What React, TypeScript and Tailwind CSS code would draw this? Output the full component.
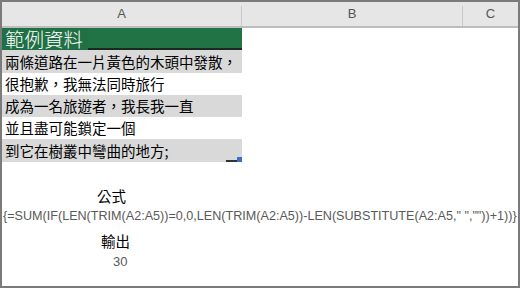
const rows = [
  { text: "兩條道路在一片黃色的木頭中發散，", bg: "bg-[#d9d9d9]", h: "h-[23px]" },
  { text: "很抱歉，我無法同時旅行", bg: "bg-white", h: "h-[22px]" },
  { text: "成為一名旅遊者，我長我一直", bg: "bg-[#d9d9d9]", h: "h-[22px]" },
  { text: "並且盡可能鎖定一個", bg: "bg-white", h: "h-[22px]" },
];

const cjk = { fontFamily: '"Noto Sans CJK TC", "Noto Sans", sans-serif' };
const latin = { fontFamily: '"Liberation Sans", Arial, sans-serif' };

const HeaderCell = ({ label, className }: { label: string; className: string }) => (
  <div className={`flex h-full ${className}`}>
    <div className="flex-1 flex items-center justify-center text-[13px] text-[#555]" style={latin}>
      {label}
    </div>
    <div className="w-px h-[20px] self-end bg-[#c9c9c9]" />
  </div>
);

export default function App() {
  return (
    <div className="w-[520px] h-[288px] border-2 border-[#7b7b7b] bg-white overflow-hidden">
      {/* Column headers */}
      <div className="flex h-[26px] bg-[#e6e6e6] border-b-2 border-[#bdbdbd]">
        <HeaderCell label="A" className="w-[240px]" />
        <HeaderCell label="B" className="w-[221px]" />
        <div className="flex-1 flex items-center justify-center text-[13px] text-[#555]" style={latin}>
          C
        </div>
      </div>

      {/* Column A data */}
      <div className="w-[240px] flex flex-col" style={cjk}>
        <div className="flex h-[22px] bg-[#217346]">
          <span className="h-full pl-[3px] pr-[5px] bg-[#1f7044] text-white text-[19.5px] leading-[22px] font-light">
            範例資料
          </span>
          <div className="flex-1 border-b-[2px] border-[#1a2a20]" />
        </div>
        {rows.map((r) => (
          <div key={r.text} className={`${r.h} ${r.bg} flex items-center pl-[3px] text-[14.5px] text-black`}>
            {r.text}
          </div>
        ))}
        <div className="relative h-[23px] bg-[#d9d9d9] flex items-center pl-[3px] text-[14.5px] text-black">
          到它在樹叢中彎曲的地方;
          {/* selection fill handle */}
          <div className="absolute left-[224px] bottom-0 w-[11px] h-[2px] bg-[#333]" />
          <div className="absolute right-0 bottom-0 w-[5px] h-[5px] bg-[#3a6fc4]" />
        </div>
      </div>

      {/* Formula section */}
      <div className="mt-[24px] flex flex-col">
        <div className="h-[20px] pl-[95px] text-[14.5px] leading-[20px] text-black" style={cjk}>
          公式
        </div>
        <div className="h-[20px] pl-px text-[12.6px] leading-[20px] text-[#595959] whitespace-nowrap" style={latin}>
          {'{=SUM(IF(LEN(TRIM(A2:A5))=0,0,LEN(TRIM(A2:A5))-LEN(SUBSTITUTE(A2:A5," ",""))+1))}'}
        </div>
        <div className="mt-[5px] h-[20px] pl-[99px] text-[14.5px] leading-[20px] text-black" style={cjk}>
          輸出
        </div>
        <div className="mt-[1px] h-[20px] pl-[111px] text-[13px] leading-[20px] text-[#595959]" style={latin}>
          30
        </div>
      </div>
    </div>
  );
}
